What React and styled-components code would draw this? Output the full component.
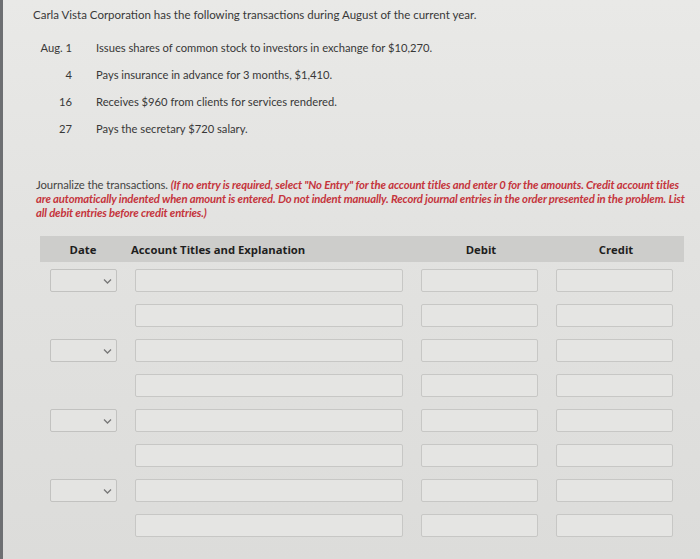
import styled, { createGlobalStyle } from "styled-components";

const GlobalStyle = createGlobalStyle`
    html, body {
        margin: 0;
        padding: 0;
    }
    body {
        background: linear-gradient(180deg, #e9e9e7 0%, #e2e2e0 45%, #dcdcda 100%);
        font-family: Lato, "Open Sans", sans-serif;
        color: #383838;
    }
`;

const Page = styled.div`
    width: 700px;
    height: 559px;
    box-sizing: border-box;
    border-left: 3px solid #6d6f72;
    padding: 7px 0 0 30px;
    overflow: hidden;
`;

const Title = styled.p`
    margin: 0;
    font-size: 11.5px;
    line-height: 16px;
`;

const Transactions = styled.div`
    margin-top: 17px;
    display: grid;
    grid-template-columns: 39px 1fr;
    column-gap: 24px;
    row-gap: 11px;
    font-size: 11.2px;
    line-height: 16px;
`;

const Day = styled.span`
    text-align: right;
`;

const Instructions = styled.p`
    margin: 41px 0 0 3px;
    font-size: 11.3px;
    line-height: 14px;
    letter-spacing: -0.1px;
    color: #444;
    white-space: nowrap;
`;

const Red = styled.span`
    color: #c5343c;
    font-style: italic;
    font-weight: 700;
    letter-spacing: -0.15px;
`;

const Table = styled.div`
    margin: 16px 0 0 7px;
    width: 644px;
`;

const HeaderBar = styled.div`
    display: grid;
    grid-template-columns: 86px 288px 134px 136px;
    align-items: center;
    height: 26px;
    background: #cdcdcb;
    font-family: "Open Sans", "DejaVu Sans", sans-serif;
    font-weight: 700;
    font-size: 11.3px;
    color: #1e1e1e;
`;

const HeadCell = styled.div`
    text-align: ${(p) => p.$align || "center"};
    padding-left: ${(p) => p.$pad || 0}px;
`;

const Rows = styled.div`
    display: flex;
    flex-direction: column;
    gap: 12px;
    margin-top: 7px;
    padding-left: 10px;
`;

const Row = styled.div`
    display: grid;
    grid-template-columns: 67px 268px 117px 117px;
    column-gap: 18px;
    height: 23px;
`;

const Select = styled.div`
    box-sizing: border-box;
    border: 1px solid #c2c2c0;
    border-radius: 2px;
    background: #e4e4e2;
    display: flex;
    align-items: center;
    justify-content: flex-end;
    padding-right: 3px;
    visibility: ${(p) => (p.$empty ? "hidden" : "visible")};
`;

const Input = styled.div`
    box-sizing: border-box;
    border: 1px solid #c7c7c5;
    border-radius: 2px;
    background: #e5e5e3;
`;

const Chevron = () => (
    <svg width="11" height="8" viewBox="0 0 11 8">
        <path d="M2 2.5l3.5 3.5 3.5-3.5" fill="none" stroke="#777" strokeWidth="1.3" />
    </svg>
);

const transactions = [
    ["Aug. 1", "Issues shares of common stock to investors in exchange for $10,270."],
    ["4", "Pays insurance in advance for 3 months, $1,410."],
    ["16", "Receives $960 from clients for services rendered."],
    ["27", "Pays the secretary $720 salary."],
];

const App = () => {
    const rows = [0, 1, 2, 3, 4, 5, 6, 7];
    return (
        <Page>
            <GlobalStyle />
            <Title>Carla Vista Corporation has the following transactions during August of the current year.</Title>
            <Transactions>
                {transactions.flatMap(([d, t]) => [
                    <Day key={d}>{d}</Day>,
                    <span key={t}>{t}</span>,
                ])}
            </Transactions>
            <Instructions>
                Journalize the transactions.{" "}
                <Red>
                    (If no entry is required, select "No Entry" for the account titles and enter 0 for the amounts. Credit account titles
                    <br />
                    are automatically indented when amount is entered. Do not indent manually. Record journal entries in the order presented in the problem. List
                    <br />
                    all debit entries before credit entries.)
                </Red>
            </Instructions>
            <Table>
                <HeaderBar>
                    <HeadCell>Date</HeadCell>
                    <HeadCell $align="left" $pad={5}>Account Titles and Explanation</HeadCell>
                    <HeadCell>Debit</HeadCell>
                    <HeadCell>Credit</HeadCell>
                </HeaderBar>
                <Rows>
                    {rows.map((i) => (
                        <Row key={i}>
                            <Select $empty={i % 2 === 1}>
                                <Chevron />
                            </Select>
                            <Input />
                            <Input />
                            <Input />
                        </Row>
                    ))}
                </Rows>
            </Table>
        </Page>
    );
};

export default App;
